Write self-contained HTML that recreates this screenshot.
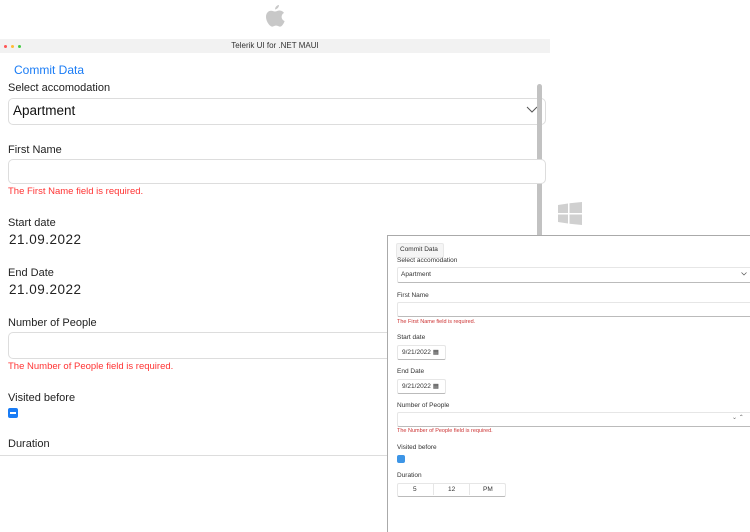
<!DOCTYPE html>
<html><head><style>
body{margin:0;width:750px;height:532px;overflow:hidden;background:#fff;font-family:"Liberation Sans",sans-serif;position:relative}
.a{position:absolute;white-space:nowrap}
.l{font-size:11px;color:#222}
.e{font-size:9.5px;color:#f33}
.box{position:absolute;border:1px solid #ddd;border-radius:5px;background:#fff}
.w{font-size:6.5px;color:#333}
.wb{position:absolute;border:1px solid #e6e6e6;border-bottom-color:#bbb;border-radius:2px;background:#fff}
</style></head><body>
<svg class="a" style="left:264px;top:4px" width="22" height="26" viewBox="0 0 22 26"><path d="M15 1c0 2-1.5 4-4 4.5C11 3 13 1.2 15 1z" fill="#c8c8c8"/><path d="M11 7.5c1.5 0 3-1.2 4.8-1 2 .2 3.3 1 4.2 2.4-3.5 2-3 6.8.6 8.2-.8 2.4-2.6 5.5-4.5 5.5-1.6 0-2-1-4-1s-2.5 1-4 1C5.800 22.6 2 17.500 2 12.8c0-3.800 2.500-6 5-6 1.800 0 2.800 .8 4 .7z" fill="#c8c8c8"/></svg>
<div class="a" style="left:0;top:39px;width:550px;height:14px;background:#f2f2f2"></div>
<div class="a" style="left:4px;top:45px;width:3px;height:3px;border-radius:50%;background:#f55"></div>
<div class="a" style="left:11px;top:45px;width:3px;height:3px;border-radius:50%;background:#fb3"></div>
<div class="a" style="left:18px;top:45px;width:3px;height:3px;border-radius:50%;background:#4c4"></div>
<div class="a" style="left:0;top:41px;width:550px;text-align:center;font-size:8px;color:#333">Telerik UI for .NET MAUI</div>
<div class="a" style="left:14px;top:63px;font-size:12px;color:#1a7cf5">Commit Data</div>
<div class="a l" style="left:8px;top:82px">Select accomodation</div>
<div class="box" style="left:8px;top:98px;width:536px;height:25px"></div>
<div class="a" style="left:13px;top:103px;font-size:13.5px;color:#111">Apartment</div>
<svg class="a" style="left:526px;top:106px" width="12" height="8"><path d="M1 1l5 5 5-5" stroke="#555" fill="none"/></svg>
<div class="a" style="left:537px;top:84px;width:5px;height:160px;border-radius:3px;background:#c2c2c2"></div>
<div class="a l" style="left:8px;top:144px">First Name</div>
<div class="box" style="left:8px;top:159px;width:536px;height:23px"></div>
<div class="a e" style="left:8px;top:186px">The First Name field is required.</div>
<div class="a l" style="left:8px;top:217px">Start date</div>
<div class="a" style="left:9px;top:232px;font-size:13.5px;color:#222;letter-spacing:.5px">21.09.2022</div>
<div class="a l" style="left:8px;top:267px">End Date</div>
<div class="a" style="left:9px;top:282px;font-size:13.5px;color:#222;letter-spacing:.5px">21.09.2022</div>
<div class="a l" style="left:8px;top:317px">Number of People</div>
<div class="box" style="left:8px;top:332px;width:400px;height:25px"></div>
<div class="a e" style="left:8px;top:361px">The Number of People field is required.</div>
<div class="a l" style="left:8px;top:392px">Visited before</div>
<div class="a" style="left:8px;top:408px;width:10px;height:10px;border-radius:2px;background:#1a7cf5"><div style="margin:4px 2px;height:1.5px;background:#fff"></div></div>
<div class="a l" style="left:8px;top:438px">Duration</div>
<div class="a" style="left:0;top:455px;width:390px;height:1px;background:#ddd"></div>
<svg class="a" style="left:558px;top:202px" width="24" height="23"><path d="M0 3l10-1.5V11H0zM11.5 1.3L24 0v11H11.5zM0 12.500h10V21.500L0 20zM11.5 12.5H24V23L11.5 21.7z" fill="#d0d0d0"/></svg>
<div class="a" style="left:387px;top:235px;width:363px;height:297px;background:#fff;border-left:1px solid #aaa;border-top:1px solid #aaa;box-sizing:border-box"></div>
<div class="wb" style="left:396px;top:243px;width:46px;height:13px;background:#f5f5f5;border-color:#e8e8e8"></div>
<div class="a w" style="left:400px;top:246px">Commit Data</div>
<div class="a w" style="left:397px;top:257px">Select accomodation</div>
<div class="wb" style="left:397px;top:267px;width:360px;height:14px"></div>
<div class="a w" style="left:401px;top:271px">Apartment</div>
<svg class="a" style="left:741px;top:272px" width="6" height="4"><path d="M.5.5l2.5 2.5 2.5-2.5" stroke="#555" fill="none" stroke-width=".7"/></svg>
<div class="a w" style="left:397px;top:292px">First Name</div>
<div class="wb" style="left:397px;top:302px;width:360px;height:13px"></div>
<div class="a" style="left:397px;top:319px;font-size:5.5px;color:#c33">The First Name field is required.</div>
<div class="a w" style="left:397px;top:334px">Start date</div>
<div class="wb" style="left:397px;top:345px;width:47px;height:13px"></div>
<div class="a w" style="left:402px;top:348px">9/21/2022 ▦</div>
<div class="a w" style="left:397px;top:368px">End Date</div>
<div class="wb" style="left:397px;top:379px;width:47px;height:13px"></div>
<div class="a w" style="left:402px;top:382px">9/21/2022 ▦</div>
<div class="a w" style="left:397px;top:402px">Number of People</div>
<div class="wb" style="left:397px;top:412px;width:360px;height:13px"></div>
<div class="a" style="left:732px;top:414px;font-size:6px;color:#666">⌄ ⌃</div>
<div class="a" style="left:397px;top:428px;font-size:5.5px;color:#c33">The Number of People field is required.</div>
<div class="a w" style="left:397px;top:444px">Visited before</div>
<div class="a" style="left:397px;top:455px;width:8px;height:8px;border-radius:2px;background:#3d95e6"></div>
<div class="a w" style="left:397px;top:472px">Duration</div>
<div class="wb" style="left:397px;top:483px;width:107px;height:12px"></div>
<div class="a" style="left:433px;top:484px;width:1px;height:11px;background:#e6e6e6"></div>
<div class="a" style="left:469px;top:484px;width:1px;height:11px;background:#e6e6e6"></div>
<div class="a w" style="left:413px;top:486px">5</div>
<div class="a w" style="left:448px;top:486px">12</div>
<div class="a w" style="left:483px;top:486px">PM</div>
</body></html>
